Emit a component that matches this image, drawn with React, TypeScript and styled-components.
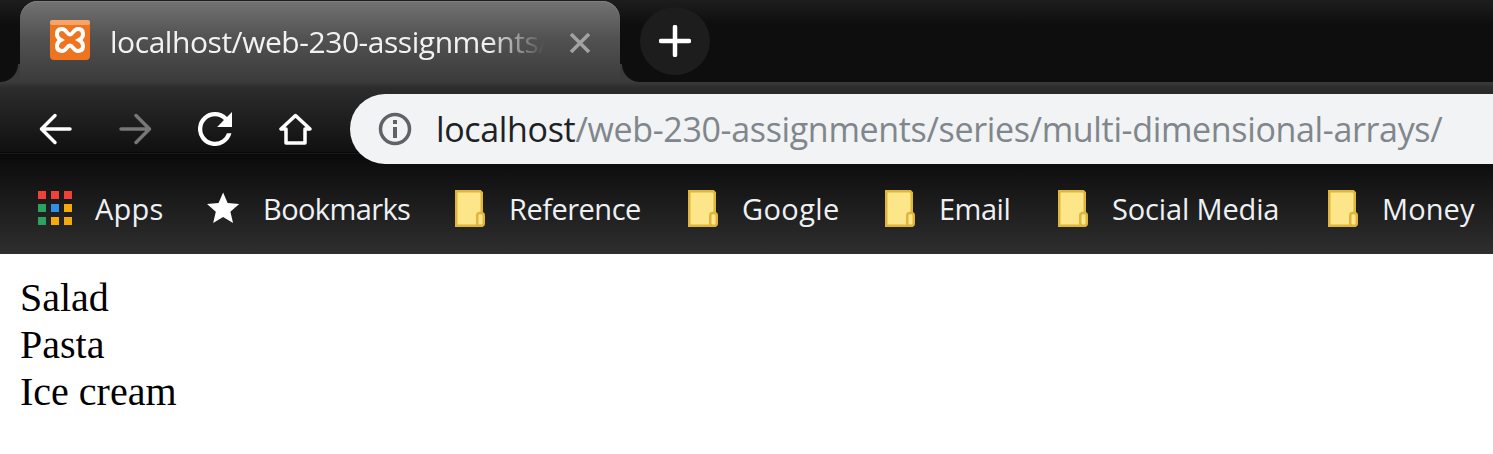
import React from "react";
import styled, { createGlobalStyle } from "styled-components";

const UI_FONT = `"Open Sans", "Noto Sans", sans-serif`;

const Global = createGlobalStyle`
  html, body {
    margin: 0;
    padding: 0;
    background: #fff;
  }
`;

const bookmarks = [
  { label: "Reference", width: 133, spacing: -0.5 },
  { label: "Google", width: 97, spacing: 0.4 },
  { label: "Email", width: 73, spacing: -0.5 },
  { label: "Social Media", width: 170, spacing: -0.15 },
  { label: "Money", width: 92, spacing: 0.1 },
];

const Folder = () => (
  <svg width="30" height="37" viewBox="0 0 30 37">
    <path d="M1.250 1.250h24l1.500 1.500V35.750H1.250z" fill="#fde58a" stroke="#e0b53c" strokeWidth="2.500" />
    <rect x="22.250" y="23" width="6.500" height="12.750" rx="2.500" fill="#fde58a" stroke="#e0b53c" strokeWidth="2.500" />
  </svg>
);

const AppsIcon = () => {
  const colours = ["#ef4136", "#ef4136", "#ef4136", "#2ba25f", "#2f8fe8", "#f5a90f", "#2ba25f", "#f5a90f", "#f5a90f"];
  return (
    <AppsGrid>
      {colours.map((c, i) => (
        <AppsDot key={i} $colour={c} />
      ))}
    </AppsGrid>
  );
};

export default function App() {
  return (
    <>
      <Global />
      <Chrome>
        <TabStrip>
          <Tab>
            <svg width="40" height="40" viewBox="0 0 40 40">
              <rect x="0" y="0" width="40" height="40" rx="4" fill="#ee7420" />
              <rect x="0" y="0" width="40" height="5" rx="2" fill="#f7a468" />
              <path
                d="M12 9C16.500 9 17 14.500 20 14.500C23 14.500 23.500 9 28 9C34 9 35 16.500 29 20C35 23.500 34 31 28 31C23.500 31 23 25.500 20 25.500C17 25.500 16.500 31 12 31C6 31 5 23.500 11 20C5 16.500 6 9 12 9Z"
                fill="none"
                stroke="#fff"
                strokeWidth="4"
              />
            </svg>
            <TabTitle>localhost/web-230-assignments/series/multi-dimensional-arrays/</TabTitle>
            <svg width="22" height="20" viewBox="0 0 22 20">
              <path d="M2 1l18 18M20 1L2 19" stroke="#a2a2a2" strokeWidth="3.500" />
            </svg>
          </Tab>
          <NewTab>
            <svg width="32" height="32" viewBox="0 0 32 32">
              <path d="M16 2v28M2 16h28" stroke="#fff" strokeWidth="4.500" strokeLinecap="round" />
            </svg>
          </NewTab>
        </TabStrip>

        <Toolbar>
          <NavRow>
            <NavButton>
              <svg width="33" height="32" viewBox="0 0 33 32">
                <path
                  d="M31 16H2.500M16 2.500L2.500 16L16 29.500"
                  fill="none"
                  stroke="#fff"
                  strokeWidth="3.500"
                  strokeLinecap="round"
                  strokeLinejoin="round"
                />
              </svg>
            </NavButton>
            <NavButton>
              <svg width="33" height="32" viewBox="0 0 33 32">
                <path
                  d="M2 16H30.500M17 2.500L30.500 16L17 29.500"
                  fill="none"
                  stroke="#777"
                  strokeWidth="3.500"
                  strokeLinecap="round"
                  strokeLinejoin="round"
                />
              </svg>
            </NavButton>
            <NavButton>
              <svg width="34" height="34" viewBox="4 4 16 16">
                <path
                  d="M17.650 6.350A7.950 7.950 0 0 0 12 4a8 8 0 1 0 7.730 10h-2.080A5.990 5.990 0 0 1 12 18a6 6 0 1 1 0-12c1.660 0 3.140.690 4.220 1.780L13 11h7V4l-2.350 2.350z"
                  fill="#fff"
                />
              </svg>
            </NavButton>
            <NavButton>
              <svg width="33" height="32" viewBox="0 0 33 32">
                <path d="M16.500 2.500L2 16h5v14h19V16h5z" fill="none" stroke="#fff" strokeWidth="3.500" strokeLinejoin="round" />
              </svg>
            </NavButton>
          </NavRow>
          <AddressBar>
            <svg width="34" height="34" viewBox="0 0 34 34">
              <circle cx="17" cy="17" r="14.500" fill="none" stroke="#5f6368" strokeWidth="3.500" />
              <rect x="15" y="15" width="4" height="11" fill="#5f6368" />
              <rect x="15" y="8" width="4" height="4" fill="#5f6368" />
            </svg>
            <Url>
              localhost<UrlPath>/web-230-assignments/series/multi-dimensional-arrays/</UrlPath>
            </Url>
          </AddressBar>
        </Toolbar>

        <BookmarkBar>
          <Bookmark>
            <AppsIcon />
            <BookmarkLabel $width={64} $spacing={0.2}>Apps</BookmarkLabel>
          </Bookmark>
          <Bookmark>
            <StarIcon width="37" height="37" viewBox="0.750 0.500 23 23">
              <path d="M12 17.270L18.180 21l-1.640-7.030L22 9.240l-7.190-.610L12 2 9.190 8.630 2 9.240l5.460 4.730L5.820 21z" fill="#fff" />
            </StarIcon>
            <BookmarkLabel $width={146} $spacing={-0.6}>Bookmarks</BookmarkLabel>
          </Bookmark>
          {bookmarks.map((b) => (
            <Bookmark key={b.label}>
              <Folder />
              <BookmarkLabel $width={b.width} $spacing={b.spacing}>{b.label}</BookmarkLabel>
            </Bookmark>
          ))}
        </BookmarkBar>
      </Chrome>

      <Page>
        <div>Salad</div>
        <div>Pasta</div>
        <div>Ice cream</div>
      </Page>
    </>
  );
}

const Chrome = styled.div`
  width: 1493px;
  overflow: hidden;
  font-family: ${UI_FONT};
`;

const TabStrip = styled.div`
  height: 82px;
  display: flex;
  align-items: flex-end;
  padding-left: 20px;
  background: linear-gradient(#1d1d1d, #0e0e0e 30%);
`;

const Tab = styled.div`
  position: relative;
  box-sizing: border-box;
  width: 600px;
  height: 81px;
  padding: 19px 29px 0 30px;
  display: flex;
  align-items: flex-start;
  gap: 20px;
  border-radius: 18px 18px 0 0;
  background: linear-gradient(#727272, #525252 45%, #3b3b3b);
  box-shadow: inset 0 1px 0 #808080;

  & > svg:last-child {
    margin-top: 13px;
    flex: none;
  }

  &::before,
  &::after {
    content: "";
    position: absolute;
    bottom: 0;
    width: 20px;
    height: 18px;
  }
  &::before {
    left: -20px;
    background: radial-gradient(circle at 0 0, #0e0e0e 17.500px, #3b3b3b 18.500px);
  }
  &::after {
    right: -20px;
    background: radial-gradient(circle at 100% 0, #0e0e0e 17.500px, #3b3b3b 18.500px);
  }
`;

const TabTitle = styled.div`
  flex: 1;
  min-width: 0;
  overflow: hidden;
  white-space: nowrap;
  color: #f2f2f2;
  font-size: 30px;
  line-height: 48px;
  margin-top: -2px;
  letter-spacing: -0.45px;
  -webkit-mask-image: linear-gradient(to right, #000 86%, transparent 99%);
  mask-image: linear-gradient(to right, #000 86%, transparent 99%);
`;

const NewTab = styled.div`
  width: 70px;
  height: 68px;
  margin: 0 0 7px 20px;
  border-radius: 50%;
  display: flex;
  align-items: center;
  justify-content: center;
  background: #1d1d1d;
`;

const Toolbar = styled.div`
  height: 82px;
  box-sizing: border-box;
  padding: 12px 0 0 15px;
  display: flex;
  gap: 15px;
  background: linear-gradient(#3b3b3b, #2c2c2c 6px, #101010 70px, #000 71px, #2a2a2a 71px, #0a0a0a 72px, #0e0e0e);
`;

const NavRow = styled.div`
  display: flex;
  align-items: center;
`;

const NavButton = styled.div`
  width: 80px;
  display: flex;
  justify-content: center;
`;

const AddressBar = styled.div`
  flex: 1;
  height: 70px;
  box-sizing: border-box;
  padding-left: 28px;
  display: flex;
  align-items: center;
  gap: 24px;
  background: #f1f3f4;
  border-radius: 35px 0 0 35px;
`;

const Url = styled.div`
  color: #202124;
  font-size: 34px;
  white-space: nowrap;
  letter-spacing: -0.34px;
`;

const UrlPath = styled.span`
  color: #80868b;
`;

const BookmarkBar = styled.div`
  height: 90px;
  box-sizing: border-box;
  padding: 0 0 2px 38px;
  display: flex;
  align-items: center;
  gap: 46px;
  background: linear-gradient(#0e0e0e, #2e2e2e);
`;

const Bookmark = styled.div`
  display: flex;
  align-items: center;
  gap: 24px;
  color: #eef1f4;
  font-size: 29px;
`;

const BookmarkLabel = styled.span<{ $width: number; $spacing: number }>`
  width: ${(p) => p.$width}px;
  white-space: nowrap;
  letter-spacing: ${(p) => p.$spacing}px;
`;

const StarIcon = styled.svg`
  margin-right: -3px;
`;

const AppsGrid = styled.div`
  width: 34px;
  margin-right: -1px;
  display: grid;
  grid-template-columns: repeat(3, 8px);
  gap: 5px;
`;

const AppsDot = styled.i<{ $colour: string }>`
  display: block;
  height: 8px;
  background: ${(p) => p.$colour};
`;

const Page = styled.div`
  padding: 20px 20px 0;
  font-family: "Liberation Serif", "Times New Roman", serif;
  font-size: 40px;
  line-height: 47px;
  color: #000;
`;
